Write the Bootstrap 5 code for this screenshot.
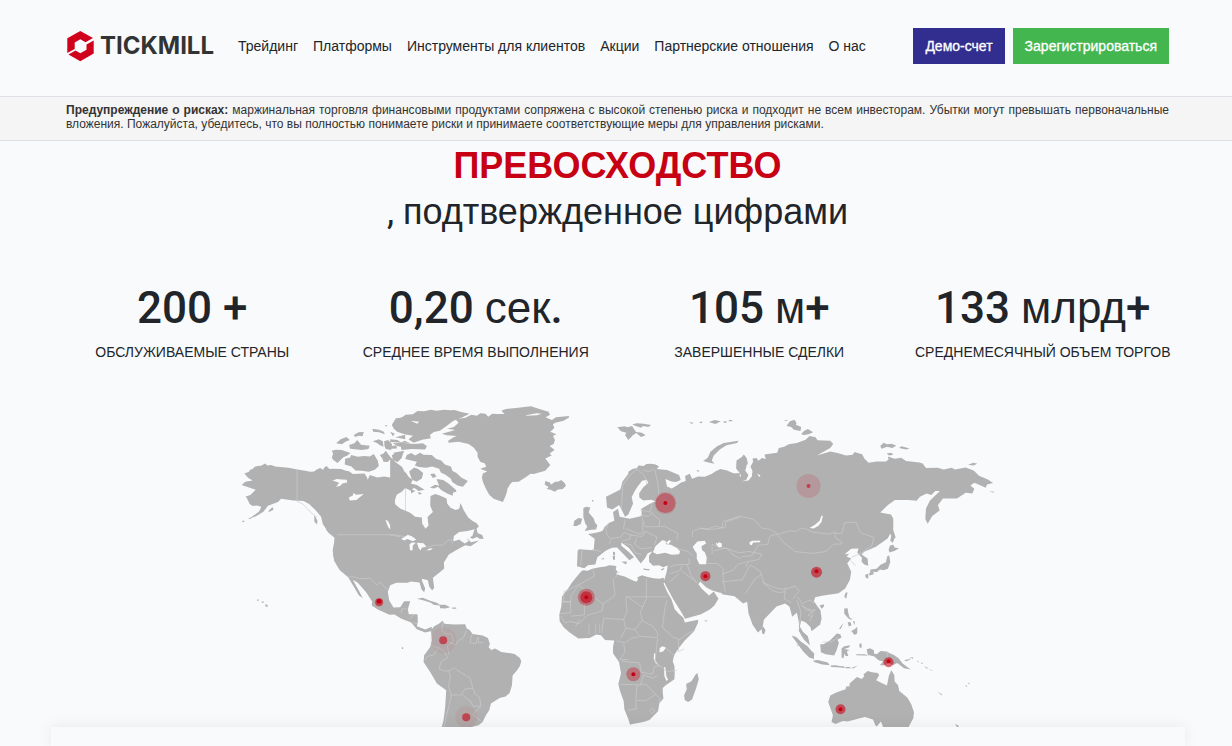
<!DOCTYPE html>
<html lang="ru">
<head>
<meta charset="utf-8">
<meta name="viewport" content="width=device-width, initial-scale=1">
<title>Tickmill</title>
<link href="https://cdn.jsdelivr.net/npm/bootstrap@5.3.0/dist/css/bootstrap.min.css" rel="stylesheet">
<style>
body{background:#f9fafc;color:#212529;font-family:"Liberation Sans",Arial,sans-serif;overflow-x:hidden}
.page-wrap{max-width:1134px;padding:0 14px 0 17px}
.site-head{height:96px;padding-top:28px}
.brand-word{font:700 24px/32px Inter,sans-serif;color:#323433}
.main-links{font-size:14px;line-height:20px;gap:15px}
.main-links .nav-link{padding:0;color:#212529}
.head-btn{height:36px;padding:0 12px;border:0;border-radius:0;font-size:14px;line-height:36px;color:#fff;-webkit-text-stroke:.3px #fff}
.btn-demo{background:#312e8f}
.btn-join{background:#44b650}
.risk-note{background:#f5f5f5;border-top:1px solid #dee2e6;border-bottom:1px solid #dee2e6;font-size:12px;line-height:14px;color:#333;text-align:justify}
.risk-note .page-wrap{padding-top:6px;padding-bottom:9px}
.main-area{padding-left:3px}
.headline{font-size:36px;line-height:46px;font-weight:400;margin:2px 0 0}
.headline strong{color:#c80013;font-weight:700}
.headline .comma,.stat-num{font-family:Roboto,sans-serif}
.stats{margin-top:47px}
.stat-num{font-size:44px;line-height:52px;font-weight:500}
.stat-num span{font-family:"Liberation Sans",Arial,sans-serif;font-weight:400}
.stat-label{font-size:14px;line-height:20px;margin-top:8px}
.world{display:block;width:63.2%;margin:38px auto 0}
.next-panel{max-width:1134px;min-height:19px;background:#f9fafc;box-shadow:0 0 16px rgba(0,0,0,.08)}
</style>
</head>
<body>
<header class="site-head">
  <div class="page-wrap mx-auto d-flex align-items-center">
    <a class="d-flex align-items-center text-decoration-none me-4 gap-1" href="#">
      <svg width="30" height="32" viewBox="0 0 30 32" aria-hidden="true">
        <path fill="#d0021b" d="M14.300 1 27 8 19.500 12.300 14.300 9.300 8.700 12.500V19L1.300 23V8.300zM27.700 10.500V23.500L14.300 31.300 2.500 24.500 9.500 20.500 14.300 23.300 20.500 19.700V14.500z"/>
      </svg>
      <span class="brand-word">TICKMILL</span>
    </a>
    <nav class="nav main-links flex-nowrap text-nowrap">
      <a class="nav-link" href="#">Трейдинг</a>
      <a class="nav-link" href="#">Платформы</a>
      <a class="nav-link" href="#">Инструменты для клиентов</a>
      <a class="nav-link" href="#">Акции</a>
      <a class="nav-link" href="#">Партнерские отношения</a>
      <a class="nav-link" href="#">О нас</a>
    </nav>
    <div class="d-flex gap-2 ms-auto text-nowrap">
      <button class="btn head-btn btn-demo" type="button">Демо-счет</button>
      <button class="btn head-btn btn-join" type="button">Зарегистрироваться</button>
    </div>
  </div>
</header>
<div class="risk-note">
  <div class="page-wrap mx-auto"><b>Предупреждение о рисках:</b> маржинальная торговля финансовыми продуктами сопряжена с высокой степенью риска и подходит не всем инвесторам. Убытки могут превышать первоначальные вложения. Пожалуйста, убедитесь, что вы полностью понимаете риски и принимаете соответствующие меры для управления рисками.</div>
</div>
<main class="main-area">
  <h1 class="headline text-center"><strong>ПРЕВОСХОДСТВО</strong><br><span class="comma">, </span>подтвержденное цифрами</h1>
  <div class="page-wrap mx-auto px-0 stats">
    <div class="row g-0 text-center text-nowrap">
      <div class="col-3"><div class="stat-num">200 +</div><div class="stat-label">ОБСЛУЖИВАЕМЫЕ СТРАНЫ</div></div>
      <div class="col-3"><div class="stat-num">0,20 <span>сек</span>.</div><div class="stat-label">СРЕДНЕЕ ВРЕМЯ ВЫПОЛНЕНИЯ</div></div>
      <div class="col-3"><div class="stat-num">105 <span>м</span>+</div><div class="stat-label">ЗАВЕРШЕННЫЕ СДЕЛКИ</div></div>
      <div class="col-3"><div class="stat-num">133 <span>млрд</span>+</div><div class="stat-label">СРЕДНЕМЕСЯЧНЫЙ ОБЪЕМ ТОРГОВ</div></div>
    </div>
  </div>
  <svg class="world" viewBox="229 400 776 327" role="img" aria-label="Карта мира">
    <g fill="#b1b1b1">
      <!-- Alaska and western Canada -->
      <g transform="translate(235 400) scale(.33333)">
        <path d="M28 220l14-5 3-6 8-2 6-7 12-3 5 1 9-5 5-3 7 6 12-1 11 4 40 4 27 5 28 5 10 2 12-1 8-6 10-4 9 5 4-7 6-4 9 9 9-1 26 1 12 4 13 3 10 8 35-2 7 11 3 8 6-14 23 7 20-3 26 5 4-22-5-18 9-8 20 15 10 20V510H318l-13-18-10-22-2-22 4-20 1-14-9-12-14-12-12-18-5-22-17-20-19-18-17-9-30-2-37-5-9 10-30 11-14 18-21 13-23 9 31-23 7-14-14-4-12 2-9-6-8-17-4-6 14-4 16-16-20-7-22-7 11-10 22-4-14-8zM272 388l17 5 14 12v12l-22-18zM237 345l10 16-1 12-8-8zM100 333l12-12 4 7-14 8z"/>
        <path d="M290 152l12-3 18 1 26 9-10 8-10 4-12 11-7 7-12-9-5-7 4-12zM330 176l15-4 3-7 20 5 18-2 18 1 12-7 12 20 3 16-12 11-18 6-22-3-18-1-12-12-20-6zM303 130l14-12 17-7 10 9-13 5-11 8zM342 135l16-5 8-10 12 14 26 3-4 10-20 3-13-2-22-2zM356 105l14-8 16-1-4 13-12-2-10 4zM412 86l20 3 14 6 3 8-17-6-18-2zM413 124l18-6 12 6 2 16-12-5-6-5zM447 124l12-4 12 13-3 17-16-3-4-9zM434 165l10-4 8-9 8 11 8 11-10 12-13-1-3-9zM472 70l16-5 4-10 18-6v52l-20-9-9-12zM480 112l30-8v14zM473 130l37-2v14l-22-3zM475 158l32-6-8 22-10 10-9-10zM22 362h6v4h-6zM38 356l10-4v4zM449 75h6v6z"/>
        <path fill="#f9fafc" d="M292 241l14-4 14 1 15 1 1 8-14 3-6 7-13 3 9-12zM341 292l12-6 2-7 8 5 23-2-14 11-8 7-20 1zM451 360l7 2 10 19 1 9-7-5-5-9zM478 300l12-28 20-8v72l-28-16zM498 413l12-5v12l-12 3z"/>
      </g>
      <!-- eastern Canada, Arctic archipelago, Greenland, Iceland -->
      <g transform="translate(390 400) scale(.33333)">
        <path d="M0 170l15 15 5 20 15 5 13 9 7 11 13 10-6 10 18 5 23 14-18 4-13-10-10 9-17-8-10 11-17 10-6 25 18 15 30 13 15 12 20 2 1 18 10 16 9-10-3-25 16-15-8-20 1-28 14-6 14 4 20 9 2 15 9 12 16 8 11-4 4-17 10 22 13 21 12 10 14 8 6 9-9 8-25 6-25 3-16 12-2 15 20-5 24-2 9 10 25-5-26 17-16-3-29 16-20 12-15 24 1 18-14 12-20 16 4 30-6 8-9-12-4-19-20-5-20 3-20 10H0z"/>
        <path d="M5 75l12-20 17-2 12-9 22-1 14-10 20 1 20-5 16 3 24-3 17 2 14-1 20 6 25 5-24 12-24 9-26 20-15 10-18 4-12 9 3 10-26 4-26 9-15-10 14-11-26-4-22-8-10-9zM30 128l14-6 20 9 34-1 12 8-5 10-40-1-31 3zM0 118l22 2 12 8-34-2zM0 95l14 6-6 8zM1 139l17-3 3 9-18 1zM45 177l5-12 13-6 12 7 15-8 10 6 25 1 12 11 16 5 11 12 18 6 5 14 12 6 14 13 20 11-15 17-16-4-16-10-4-10-15-11-15-8-5-11-21-7-18 4-22-2-12-5 6-11zM119 262l16-8 12 3-8-20 20 3 16 10 11 10 10 8 3 7-10 2-2 10-16-7-16-9-12-11-12 5zM120 222l12-2 7 9-11 5zM57 214l15-12 12 5 15 12-4 16-16 10-14-7zM5 165l32-10-3 19-12 12-14-6zM62 268l14 4-13 8zM84 275l12 5-10 4zM239 413l8-7 5-16 7-6 3 15 14 6 4 12-12-1-8-5-12 5zM192 436l15-6 16 1-12 8-14 7z"/>
        <path d="M155 101l40-11-24-4 20-5 14-13-9-10 30-5 17-9 17 3 10-7 16 1 8 9 12-9 15 1 22 0-10-10 14-5 30-3 45-5L445 26 475 35 479 44 466 52 485 60 497 52 535 48 537 52 520 62 495 68 488 73 492 84 480 95 498 103 488 108 494 120 490 132 478 138 493 150 478 160 484 166 465 175 480 195 465 212 430 222 421 221 405 232 385 245 366 246 360 252 352 265 350 275 345 290 338 306 325 301 310 296 297 284 288 268 278 246 275 232 278 220 291 214 270 206 288 200 284 190 270 185 262 170 262 158 250 142 235 132 205 125 175 128 174 122 190 112 200 108 170 106z"/>
        <path d="M465 243l14 4 3 7 12-9 9 0 10-5 10 9 4 8-10 10-14 1-10 7-12-6-12-2 6-6-12-8zM80 596l18-3 20 8 12 4 10 3 12 9-22-3-8-6-18-6zM148 614l17 0 15 7-14 4-16-1zM186 622h12v4h-12z"/>
        <path fill="#f9fafc" d="M33 417l20-13 13 5 12 9-10 5-16-6-10 4zM58 432l7-5 12 1-9 8-1 21-7 2zM80 428l20 1 9 11-15 3-2 8-6-6zM84 461l13-4 9-1-12 7zM106 452l14-8 8 2-15 8zM202 404l14 0 8 6 12 12-12 8-14-9-4-8zM405 47l35-1 14-5-15-1-28 5zM62 62l25 3-6 6zM28 128l70 1-25 2z"/>
      </g>
      <!-- southern USA, Mexico, Central America -->
      <g transform="translate(235 550) scale(.33333)">
        <path d="M293 0H600v42l-20 15-15 19-5 14 10 25-3 11-8-8-6-21-33-4-8 3-22-2-10 5-15 6-7 20 4 25 13 22 20-1 12-18 18 0-7 25 3 14 26 0 1 23-3 13 25 10 20-8v12l-20 5-25-10-17-20-29-11-21-13-15 1-35-16-18-12 1-12-18-28-25-28-15-9 18 32 12 23-12-9-14-24-18-30-25-21-17-28zM66 148h5v4h-5zM90 162l7 2 2 5-7 1zM80 154h6v4h-6zM500 291h4v5h-4z"/>
      </g>
      <!-- South America -->
      <g transform="translate(400 590) scale(.33333)">
        <path d="M92 120l10-12 14-7 11-9 6 9 30 2 32-1 4 12 10 6 8 11 30 5 16 7 6 18-4 10 8 8 12-4 18 10 28 4 12 2 16 12 4 10-4 14-9 14-13 15-2 30-7 22-12 11-18 4-26 17-5 20-10 15-10 20-12 10-18 4v12H122l8-31 5-40 3-50-28-20-20-35-20-30 2-20 18-25 5-20z"/>
      </g>
      <!-- Europe, Middle East -->
      <g transform="translate(540 400) scale(.33333)">
        <path d="M197 290l18-9 12-6 13-7 6-23 18-24 0-6 12-8 14-3 4-8 16 2 8-6 14-1 14 2 10 6-7 8 31 3 36 15 5 15-14 6-14-2-18-7 5 22 14 6 14-8 14-10 14-4-2-15 14-7 7 15 18-7 20 1 20-8 30-4 17 4 38-3V580l-60-2-24-8-16-8-19-18-5 8 10 14 22 20 14-12 14 22-12 20-14 12-26 14-48 14-11-20-24-38-24-44-4-12 8-28 3-18-14 5-12-6-18 2-12-12 0-18 10-14-14 6-8 15-13 16-16-22-20-25-22-16 0 10 24 20 14 14-14 9-10-10-27-28-15 1-18 8-26 20-6 22-22 2-11 9-22-6 2-46 4-5 44 3 3-34-20-14 12-2 22-4 10-4 6-12 14-12 15-6-4-26 15-10 5 24 30 6 36-8-1-22 24-14 20-9-38-1-12-10-1-12 12-18 16-14-5-9-14 3-13 17-8 12-10 20 4 20-14 32-10 7-12-25-6-10-20 13-16-6z"/>
        <path d="M129 324l9-4 12 2-5 15 15 18 4 12 7 9-4 12-14 1-20 4 8-14-6-8-6-20zM99 378l3-16 12-8 12 2-5 16-12 6zM231 82l22-3 8 3 14-4 12 18 17 2 12 8-14 5-14-12-10 6-14 15-10-15 4-7-16-4zM276 73l14-3 20 1 22 4-8 6-16-3-6 5-18-6zM488 183l14-10 8-18 20-16 20-10 44-7-4 7-32 7-20 12-18 18-6 15 8 10-18-4zM445 66l14 2-4 4zM475 68l10-4 0 6zM505 66l18-6 18 4-16 8zM550 64h8v4h-8zM565 60h10v4h-10zM218 454l6 2 0 10-6-2zM217 467l7 0 0 12-6 0zM243 485l17-1-3 9zM308 505l20 2-2 4-16-2zM360 508l13-5-6 8zM181 477l10-4v4zM155 300h4v4h-4zM467 212l8-2 0 6z"/>
        <path fill="#f9fafc" d="M338 456l7-18 20-18 10 2 2 10 14 2 20 10 8 10-3 8-22 2-20-6-24 4zM376 428l10-8 6 2-8 10zM457 440l14-16 22-2 4 8-14 8 2 12 8 6 6 16-2 20-20 0-8-16 0-16-8-12zM526 430l8-6 10 2 0 14-10 2-4-6zM303 302l30-3 12 5-20 4z"/>
      </g>
      <!-- Asia -->
      <g transform="translate(700 400) scale(.33333)">
        <path d="M30 225l14-11 16-7 20 4 20 9 13 12 9-4-5-10-10-13 1-24 16-10 6-8 8 10 4 16-8 22 10 14-7 15-15 4 22-3 10-12 2-16-6-14 8-14-2-10 12-1 6 8 10-8 12 3-4-14 38-5 5-14 16-4 14-7 24-4 26-10 12-11 18 4 6 9 38 1 9 10-9 12-40 22 40-12 22 5 25 7 20-2 6-8 14 4 8 2 8 14 12 12 24-4 28 0 8-6-2-9 20 7 20-3 14 10 40 4 10 3 10 14 35-1 18 5 24-5 10 5 32-6 24 9 16 16 28 12 14 10-18 4-4 10-18-8-16-7-12 8 12 10-6 14-20-2-26 17-42 0-15 20 5 16-22 17-14 23-7-14 2-32 12-24 30-28-14 0-12 12-14-5-20 10-10 12-24-2-41 0-20 14-24 23 32 6 7 12 0 30-17 30-35 25-35 15-8 8 18 12 2 22-12-4-8-8 1-12-14-16 4-12-22 1-20 16 14-1-8 8 14 6-12 14 12 26-4 24-14 26-20 14-50 8-20 4-4 12 20 28 3 24-4 18-26 20-3-12-14-14-14-6-4 18 10 17 14 12 6 28-18-18-14-26-1-26-6-28-14 12-8-30-13-10-26 9-38 40-4 26-14 12-16-24-12-34-4-34-12 5-26-22-38-6z"/>
        <path d="M250 62l10-3 0 4zM258 78l10-14 14-5 6 10-2 5 16 7-2 12-20-4-8-8zM302 103l8-10 12-6 16 10-14 6-14 2zM539 138l10-10 10 5 14-2 14 6-12 7-16-4-16 6zM595 144l8-5 24 6-10 3zM558 160l14-2 6 6-12 2zM802 194l16-6 12 3-12 5zM864 274l14 0 4 4zM569 364l8 2 0 20 8 26-4 4-4 12-8-6 3-14-6-14zM568 436l10-2 4 8 13 2-12 8-16 5-3-8zM560 468l6-2 3 20-7 20-14 4-10-2-10 8-10-2-10 4 2-10 18-2 12-12 16-8zM505 519l14-5 0 8-12 4zM494 524l9-3 0 15-8-4z"/>
        <path fill="#f9fafc" d="M327 384l16-10 14-12 6-16 4 2-4 18-10 12-14 7zM147 426l8-4 25 0-2 4-20 1-4 8-6-2zM48 432l8-6 8 4 0 10-10 2zM137 195l6 2-2 10zM170 220l10 6-4 5z"/>
      </g>
      <!-- Africa -->
      <g transform="translate(540 560) scale(.33333)">
        <path d="M122 34l6-4 14 2 14-6 22-5 18-2 10-4 18 2 4 3-2 9 6 5-5 8 26 7 20 10 14 6 6-6-2-8 14-6 14 5 20 4 18 2 12-3 8 14-8 2 12 28 12 20 10 30 12 14 14 12 4 14 40-8 0 8-12 26-28 28-16 20-16 24-4 18 5 14 1 22-1 18-26 18-9 8 0 12 2 20-12 14-4 24-26 26-18 6-32 6-8 2-5-16-12-30-2-24-12-34-4-18 8-32-6-34-18-26 0-20 4-18-28-2-12-14-14-2-20 10-34 2-26-18-18-16-12-18-1-20 6-24 2-30 20-26 10-16zM466 342l5-4 4 20-8 26-12 34-12 7-10-6-2-14 8-18-2-16 16-8z"/>
        <path fill="#f9fafc" d="M358 263l8-5 11 4-8 11-12 4zM341 278l4 3-1 18 10 16-8-6-6-14zM371 320l4 2 3 26 5 10-5 4-6-14z"/>
        <path d="M490 182l10-2 0 4z"/>
      </g>
      <!-- South-East Asia and Oceania -->
      <g transform="translate(720 560) scale(.33333)">
        <path d="M329 406l20-10 26-9 2-8 10-1 0-8 22-20 14 6 8-8-2-6 12-10 14 4 16 2 5 6-9 16 16 8 16 8 6-30 7-16 9 14 1 20 10 10 4 18 24 20 12 20 8 24-2 18-16 30h-73l-8-20-12 14-4-2-8-18-24-8-24 6-28 8-14-2-22 9-12-6 4-20-14-40zM438 268l10-4 12 6 0 10 8 2 12-10 16 2 24 10 14 10 12 16 14 10 10 8-20-4-20-16-12 6-14-6-16 8-10-2 10-10-14-4-14-12-18-4zM299 252l10 0 20-12 20-20 10 2 4 10-12 6 4 10-6 20-8 18-26-4-14-6zM213 226l14 4 14 14 20 14 10 12 10 10-1 16-14-4-18-18-16-22zM278 301l14-2 30 8 5 8-22-2-24-8zM233 208l10 4 16 14 8 22-8-4-14-14zM123 204l6-4 6 10-4 12-6-2zM297 136l12-4 2 6-8 8zM371 110l4-12 6-2-4 20zM371 145l10-1 2 14 4 14 10 6-8 0-6-4-12-14zM355 206l14-18-8 18zM381 187l8-2 4 10-8 4zM392 212l12-6 6-6 0 20-8 4zM397 182l6 2-1 12zM363 265l8-7 18-3-4 7-14 4 16 3-8 4 4 14-8 0-4-7-2 14-6-2zM416 252l6-4 2 12-6 4zM406 282h12l14 0 12 4-14 0-22-1zM330 316l14-1 14 2 14 2 0 4-20-2-20-1zM390 324l22-8-12 8zM375 320h14v4h-14zM550 300l16-4 6-6-4 8-10 5zM570 290l8 2-2 4zM588 300l8 5-4 0zM600 306l8 4-4 1zM610 318l14 6-6 1zM625 327l12 4-6 0zM650 394l14 8 0 4zM735 375l5 2-4 4zM741 370l5-3 0 5zM703 492l8 2 4 6-6 0zM228 252l6 4-2 2z"/>
      </g>
    </g>
    <!-- country borders -->
    <g fill="none" stroke="#cbcbcb" stroke-width="2" stroke-linejoin="round">
      <path transform="translate(235 400) scale(.33333)" d="M186 208v96M305 404h175l30 6M186 304l18 8 24 26 18 14"/>
      <path transform="translate(390 400) scale(.33333)" d="M0 404l30 6M112 441l20-6h26l10-10 14-8 6 14"/>
      <path transform="translate(235 550) scale(.33333)" d="M340 80l18 0 17 6 30-2 20 20 10-8 15 17 10 8M498 190l2-14h16M522 205l16-12M534 218l12 2"/>
      <path transform="translate(400 590) scale(.33333)" d="M128 97l-4 22 12 12h18l6 22-18 14 4 26M198 120l-8 22-14 8-10 14-18-8M215 132l-6 26 18 2 6-20M235 140l0 18 14-2M92 162l10 8 14 2-16 22-18 4-8 10M118 174l16 12 8 18-18 8-8 24 18 6 12 0 14-8 6 0M145 240l6 20-6 26 8 30M168 238l16 10 26 16 8 30-24 2-10 18-30 0-8 34-8 30-6 34M218 294l6 16 14 12 4 26-24 0-6-14-26-20M242 348l-24 24 24 20"/>
      <path transform="translate(540 400) scale(.33333)" d="M243 325l2-30 2-40 22-30 22-20M320 252l-8-26-26-22M306 210l20 4 14-6M344 210l8 40 4 34-14 18M300 330l30 6 4-22M300 345l24 4 14-14M334 340l24 20-2 20-42 0-10-30M206 368l-10 18 4 18 12 14-6 14M255 358l-6 28M255 385l40 16 12-4v-30M212 415l30-4 8-14 22 8-4 12-24 6M270 405l36 4 8-16 36 18-8 24M290 412l-8 20 20 14 32-4M252 430l20 4 12 24 20 6M358 380l14-2 40 22-2 18M125 450l-4 46M155 448l26 6M388 500l20-6 40-2-4-16M440 492l12 34 16 20M388 520l30-8 6-14M424 512l46 36M388 545l28-24M456 410l0-16 24-10 20 4 24-10 30 6 2-18 44-16M515 462v-30l22 10 26 4 14 18 23 12M498 490l34 0 16 16 0 28 6 40M410 445l34 10 14 14"/>
      <path transform="translate(700 400) scale(.33333)" d="M0 384l30 4 34-4 4-20 52-16 40 10 24 26 26 4 24 14 34-10 20 2 14-10 14 2 20 10 48 6 22-6M228 402l-20 6-6 24-30 4-16 30-34 4M228 402l24 28 20 14 10 10 54 6 40-6 24-22 22 0 2-6-20-14 0-12 20 0 8-32 34-2 14 32 40 14-6 24-30 22-32 14M75 444l40 14 30-4 40 8-10 16-30 6-10 16M75 444l-35 8M65 522l34-12 14-18 30-8M65 545l60-6 24-44M150 494l30 20 10 34 30 14 30 6 34-10 12 14-18 24M135 580l30-46 20-12M185 545l30 26 20 6 20-2M255 560l-4 36 22 12M290 590l16 20 20-10 20 10M305 618l22 10 10 16-10 20M450 482l16 14"/>
      <path transform="translate(540 560) scale(.33333)" d="M158 28l4 20-40 22-40 20M112 72l76 60 36-26-6-50M225 52l12-18M318 55v60M256 110h126M318 115l-12 26-46-32M82 92h-10l-4 34h24v-18l20-30M66 124l24 0 2 34-32 2M132 132v32l-40 4M188 132l-2 20-46 14-22 24-28-6-16 4-12-20M256 112l4 42-10 24-60-4-6 44M250 178l6 26 28 4 22-28-6-22 8-20M256 204l-14 30M284 208l14 20 50 4 6-8-14-24-36-20M380 120l-6 22-8 60 30 28 22 8 20-16 22-10M352 232l-4 36-4 38M414 238l0 36 18-8M372 260l32 28M228 242l26 6 20-14 20-4M250 250l4 26-16 22 26 0M244 302l24 4 30 2 4 28 34 6 6-22 18-4M345 308l36 26 28-4M240 372l60 2 10-30 28 10 14-10M290 374l-4 48 2 24-26 4M290 420l26 2 30-20-28-28-18-2M346 402l14 14-4 14M328 452l6-8 10 6-8 10zM106 198l12-20M146 222v-28M166 220v-30M178 218l0-26"/>
      <path transform="translate(720 560) scale(.33333)" d="M229 120l12 34-4 40M240 130l16 20 30 0M274 170l-12-6 22-14M500 272v32M306 246l30-2 16-14"/>
    </g>
    <!-- pulse markers -->
    <g fill="#c80013">
      <g fill-opacity=".14"><circle cx="443" cy="640" r="13" fill-opacity=".05"/><circle cx="466" cy="717" r="11" fill-opacity=".06"/><circle cx="808" cy="486" r="12"/></g>
      <g fill-opacity=".35"><circle cx="665" cy="503" r="10"/><circle cx="665" cy="503" r="11" fill-opacity=".12"/><circle cx="586" cy="597" r="8.500"/><circle cx="633" cy="674" r="7"/></g>
      <g fill-opacity=".58"><circle cx="379" cy="602" r="4"/><circle cx="443" cy="640" r="4"/><circle cx="466" cy="717" r="4"/><circle cx="586" cy="597" r="6"/><circle cx="705" cy="576" r="5"/><circle cx="816" cy="572" r="5.500"/><circle cx="888" cy="662" r="5"/><circle cx="840" cy="709" r="5"/><circle cx="808" cy="486" r="2"/></g>
      <circle cx="379" cy="601" r="2.500"/><circle cx="665" cy="503" r="2"/><circle cx="586" cy="597" r="2"/><circle cx="633" cy="674" r="2"/><circle cx="705" cy="576" r="2"/><circle cx="816" cy="571" r="2"/><circle cx="888" cy="661" r="2"/><circle cx="840" cy="709" r="2"/>
    </g>
  </svg>
  <section class="next-panel mx-auto position-relative"></section>
</main>
<script src="https://cdn.jsdelivr.net/npm/bootstrap@5.3.0/dist/js/bootstrap.bundle.min.js"></script>
</body>
</html>
